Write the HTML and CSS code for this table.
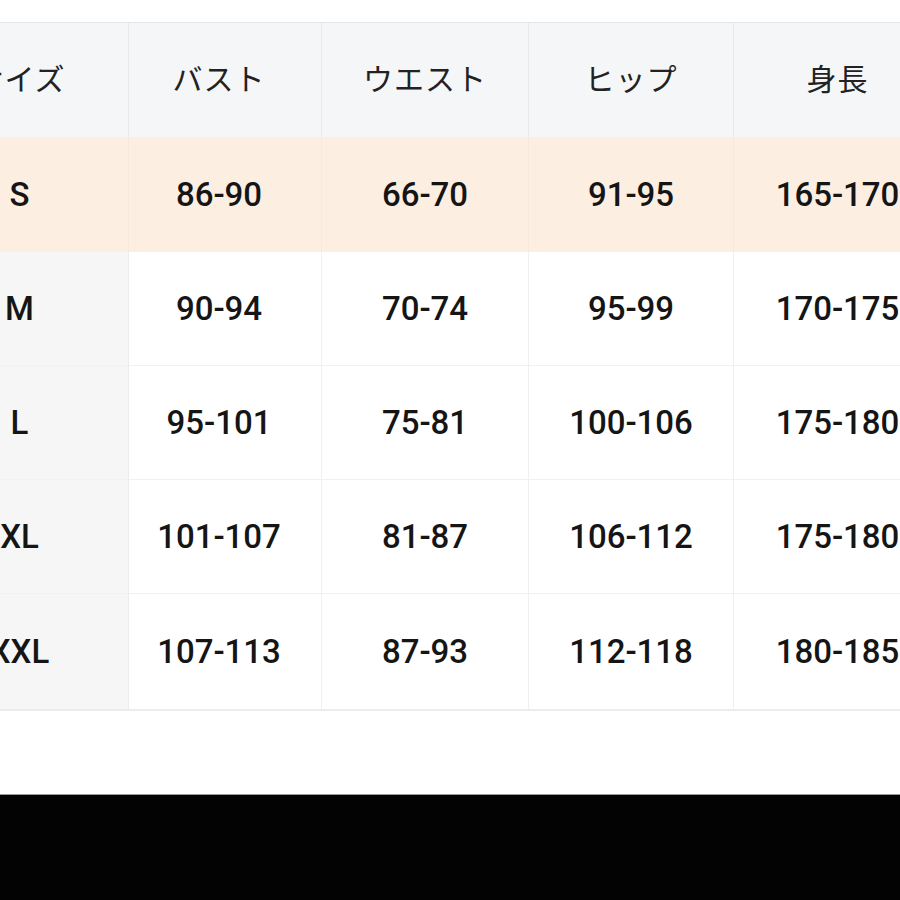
FILE: index.html
```html
<!DOCTYPE html>
<html lang="ja">
<head>
<meta charset="utf-8">
<title>サイズ表</title>
<link rel="stylesheet" href="styles.css">
</head>
<body>
<div class="page">
  <div class="viewport">
    <div class="table">
      <div class="cell head first">サイズ</div>
      <div class="cell head c1">バスト</div>
      <div class="cell head">ウエスト</div>
      <div class="cell head">ヒップ</div>
      <div class="cell head">身長</div>

      <div class="cell hl first">S</div>
      <div class="cell hl c1">86-90</div>
      <div class="cell hl">66-70</div>
      <div class="cell hl">91-95</div>
      <div class="cell hl">165-170</div>

      <div class="cell first">M</div>
      <div class="cell c1">90-94</div>
      <div class="cell">70-74</div>
      <div class="cell">95-99</div>
      <div class="cell">170-175</div>

      <div class="cell first">L</div>
      <div class="cell c1">95-101</div>
      <div class="cell">75-81</div>
      <div class="cell">100-106</div>
      <div class="cell">175-180</div>

      <div class="cell first">XL</div>
      <div class="cell c1">101-107</div>
      <div class="cell">81-87</div>
      <div class="cell">106-112</div>
      <div class="cell">175-180</div>

      <div class="cell first last">XXL</div>
      <div class="cell c1 last">107-113</div>
      <div class="cell last">87-93</div>
      <div class="cell last">112-118</div>
      <div class="cell last">180-185</div>
    </div>
  </div>
  <div class="bar"></div>
</div>
</body>
</html>
```

FILE: styles.css
```css
html, body {
  margin: 0;
  padding: 0;
  background: #ffffff;
}

.page {
  width: 900px;
  height: 900px;
  display: flex;
  flex-direction: column;
  overflow: hidden;
}

.viewport {
  height: 794px;
  overflow: hidden;
  padding-top: 22px;
  box-sizing: border-box;
}

.table {
  display: grid;
  grid-template-columns: 218px 193px 207px 205px 208px;
  grid-auto-rows: 114.3px;
  margin-left: -89px;
  width: 1031px;
  border-top: 1px solid #e6e6e8;
  border-bottom: 2px solid #ececec;
}

.cell {
  display: flex;
  align-items: center;
  justify-content: center;
  font-family: Roboto, "Noto Sans CJK JP", sans-serif;
  font-weight: 500;
  font-size: 33px;
  color: #151515;
  background: #ffffff;
  border-right: 1px solid #f0f0f0;
  border-bottom: 1px solid #f1f1f1;
  box-sizing: border-box;
}

.cell.c1 {
  padding-right: 12px;
}

.cell.first {
  background: #f6f6f7;
  border-right: 1px solid #ececee;
}

.cell.head {
  background: #f5f6f7;
  font-family: "Noto Sans CJK JP", sans-serif;
  font-weight: 400;
  font-size: 30px;
  color: #222222;
  border-right: 1px solid #e9e9eb;
  border-bottom: none;
  letter-spacing: 1px;
  padding-bottom: 6px;
}

.cell.head.c1 {
  padding-right: 12px;
}

.cell.hl {
  background: #fdeee2;
  border-right: 1px solid #f9e8db;
  border-bottom: none;
}

.cell.last {
  border-bottom: none;
}

.bar {
  flex: 1;
  background: #030303;
  border-top: 1px solid #9a9a9a;
}
```
